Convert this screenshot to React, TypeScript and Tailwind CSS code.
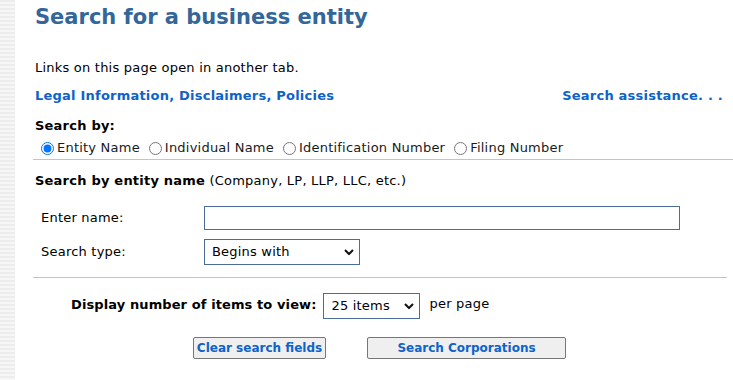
import React from "react";

const linkCls = "font-bold text-[#0d63c9] no-underline";

const Chevron = () => (
  <svg
    className="pointer-events-none absolute right-[6px] top-1/2 -translate-y-1/2"
    width="10"
    height="7"
    viewBox="0 0 10 7"
  >
    <path d="M1 1.5 L5 5.5 L9 1.5" fill="none" stroke="#111" strokeWidth="2" />
  </svg>
);

const Select = ({ value, options, width }: { value: string; options: string[]; width: string }) => (
  <div className={`relative h-[26px] ${width}`}>
    <select
      defaultValue={value}
      className="h-full w-full appearance-none border border-[#4b6d99] bg-white pl-[7px] text-[13px] tracking-[0.2px] text-black outline-none"
    >
      {options.map((o) => (
        <option key={o}>{o}</option>
      ))}
    </select>
    <Chevron />
  </div>
);

const btnCls =
  "h-[22px] rounded-[2px] border border-[#767676] bg-[#efefef] px-0 text-[12px] font-bold tracking-normal whitespace-nowrap text-[#0d63c9]";

export default function App() {
  return (
    <div className="flex min-h-[380px] bg-white font-['DejaVu_Sans',Verdana,sans-serif] text-[13px] tracking-[0.22px] text-black">
      <div className="w-[15px] shrink-0 bg-[repeating-linear-gradient(to_bottom,#ececec_0px,#ececec_2px,#f6f6f6_2px,#f6f6f6_4px)]" />
      <div className="flex-1 pt-[1px] pl-[18px]">
        <h1 className="h-[32px] pl-[2px] text-[21px] leading-[32px] font-bold tracking-normal text-[#336699]">
          Search for a business entity
        </h1>

        <p className="mt-[24px] h-[22px] pl-[2px] leading-[22px]">Links on this page open in another tab.</p>

        <div className="mt-[6px] flex h-[22px] items-center justify-between pr-[10px] pl-[2px]">
          <a href="#" className={linkCls}>Legal Information, Disclaimers, Policies</a>
          <a href="#" className={linkCls}>Search assistance. . .</a>
        </div>

        <div className="mt-[8px] h-[22px] pl-[2px] leading-[22px] font-bold">Search by:</div>
        <div className="flex h-[22px] items-center pl-[3px] text-[#1a1a1a]">
          <label className="mr-[4px] flex items-center">
            <input type="radio" name="by" defaultChecked className="mr-[3px] ml-[5px] h-[13px] w-[13px] accent-[#0075ff]" />
            Entity Name
          </label>
          <label className="mr-[4px] flex items-center">
            <input type="radio" name="by" className="mr-[3px] ml-[5px] h-[13px] w-[13px]" />
            Individual Name
          </label>
          <label className="mr-[4px] flex items-center">
            <input type="radio" name="by" className="mr-[3px] ml-[5px] h-[13px] w-[13px]" />
            Identification Number
          </label>
          <label className="flex items-center">
            <input type="radio" name="by" className="mr-[3px] ml-[5px] h-[13px] w-[13px]" />
            Filing Number
          </label>
        </div>

        <div className="border-t border-[#c4c4c4]" />

        <div className="mt-[10px] h-[22px] pl-[2px] leading-[22px]">
          <span className="font-bold">Search by entity name</span> (Company, LP, LLP, LLC, etc.)
        </div>

        <div className="mt-[14px] flex h-[24px] items-center">
          <span className="w-[171px] pl-[8px]">Enter name:</span>
          <input
            type="text"
            className="h-[24px] w-[476px] border border-[#4b6d99] bg-white px-[4px] text-[13px] outline-none"
          />
        </div>

        <div className="mt-[9px] flex h-[26px] items-center">
          <span className="w-[171px] pl-[8px]">Search type:</span>
          <Select value="Begins with" options={["Begins with", "Contains", "Exact match"]} width="w-[156px]" />
        </div>

        <div className="mt-[12px] mr-[6px] border-t border-[#c4c4c4]" />

        <div className="mt-[15px] flex items-start">
          <span className="mt-[2px] ml-[38px] font-bold tracking-[0.1px]">Display number of items to view:</span>
          <div className="ml-[7px]">
            <Select value="25 items" options={["25 items", "50 items", "100 items"]} width="w-[97px]" />
          </div>
          <span className="mt-[1px] ml-[9px]">per page</span>
        </div>

        <div className="mt-[18px] flex">
          <button className={`ml-[160px] w-[133px] ${btnCls}`}>Clear search fields</button>
          <button className={`ml-[41px] w-[199px] ${btnCls}`}>Search Corporations</button>
        </div>
      </div>
    </div>
  );
}
